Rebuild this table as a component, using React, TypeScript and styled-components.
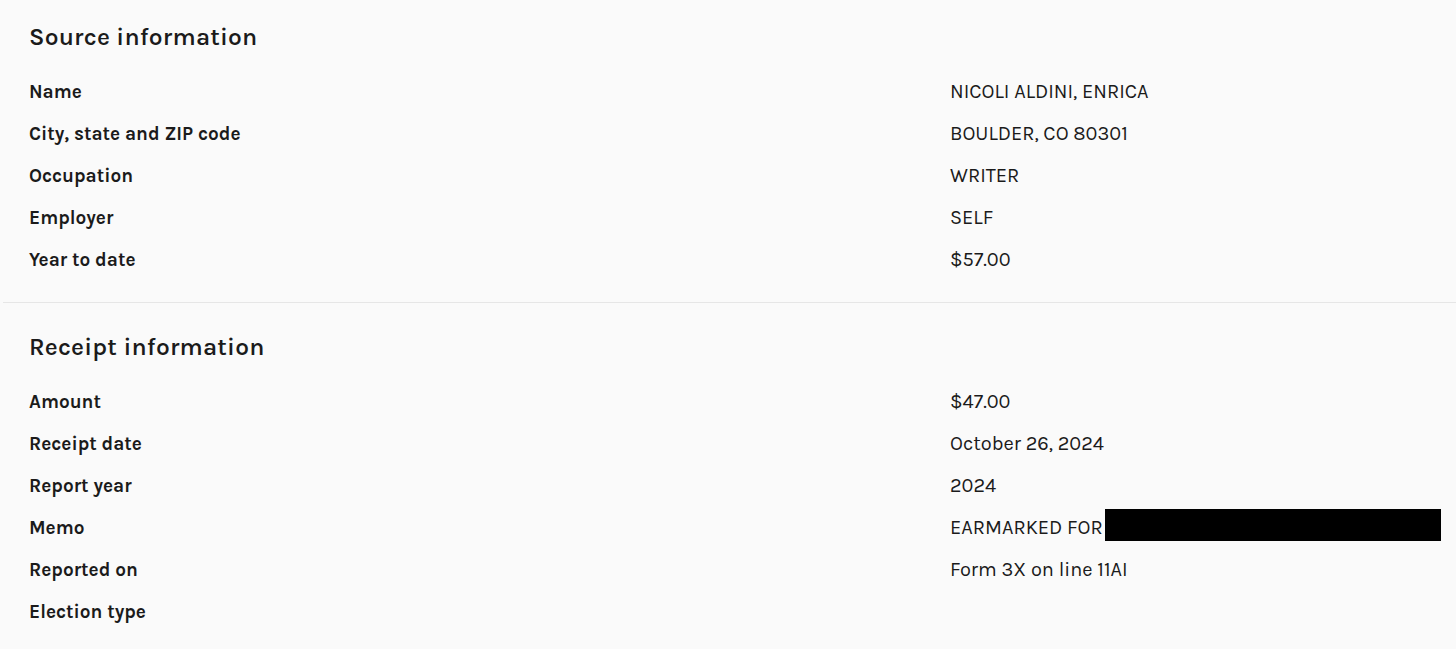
import React from "react";
import styled, { createGlobalStyle } from "styled-components";

const Global = createGlobalStyle`
  html, body { margin: 0; padding: 0; background: #fafafa; }
  body { font-family: "Karla", "Inter", "Noto Sans", sans-serif; color: #1b1b1b; }
`;

const Page = styled.div`
  padding: 0 0 0 3px;
`;

const Section = styled.section<{ $top: number; $divider?: boolean }>`
  padding: ${(p) => p.$top}px 0 21px 26px;
  border-bottom: ${(p) => (p.$divider ? "1px solid #e6e6e6" : "none")};
`;

const Heading = styled.h2`
  margin: 0 0 19px 0;
  font-size: 24.6px;
  line-height: 30px;
  font-weight: 600;
  letter-spacing: 0.2px;
`;

const Rows = styled.dl`
  margin: 0;
  display: grid;
  grid-template-columns: 921px 1fr;
  grid-auto-rows: 42px;
  align-items: center;
`;

const Label = styled.dt`
  font-size: 19px;
  font-weight: 700;
  line-height: 42px;
`;

const Value = styled.dd`
  margin: 0;
  font-size: 20px;
  font-weight: 400;
  line-height: 42px;
  display: flex;
  align-items: center;
`;

const Redacted = styled.span`
  display: inline-block;
  width: 336px;
  height: 32px;
  background: #000;
  margin-left: 2px;
  margin-top: -6px;
`;

const source: [string, React.ReactNode][] = [
  ["Name", "NICOLI ALDINI, ENRICA"],
  ["City, state and ZIP code", "BOULDER, CO 80301"],
  ["Occupation", "WRITER"],
  ["Employer", "SELF"],
  ["Year to date", "$57.00"],
];

const receipt: [string, React.ReactNode][] = [
  ["Amount", "$47.00"],
  ["Receipt date", "October 26, 2024"],
  ["Report year", "2024"],
  ["Memo", <>EARMARKED FOR<Redacted /></>],
  ["Reported on", "Form 3X on line 11AI"],
  ["Election type", ""],
];

const Block = ({ title, rows, top, divider }: { title: string; rows: [string, React.ReactNode][]; top: number; divider?: boolean }) => (
  <Section $top={top} $divider={divider}>
    <Heading>{title}</Heading>
    <Rows>
      {rows.map(([k, v]) => (
        <React.Fragment key={k}>
          <Label>{k}</Label>
          <Value>{v}</Value>
        </React.Fragment>
      ))}
    </Rows>
  </Section>
);

export default function App() {
  return (
    <Page>
      <Global />
      <Block title="Source information" rows={source} top={22} divider />
      <Block title="Receipt information" rows={receipt} top={29} />
    </Page>
  );
}
